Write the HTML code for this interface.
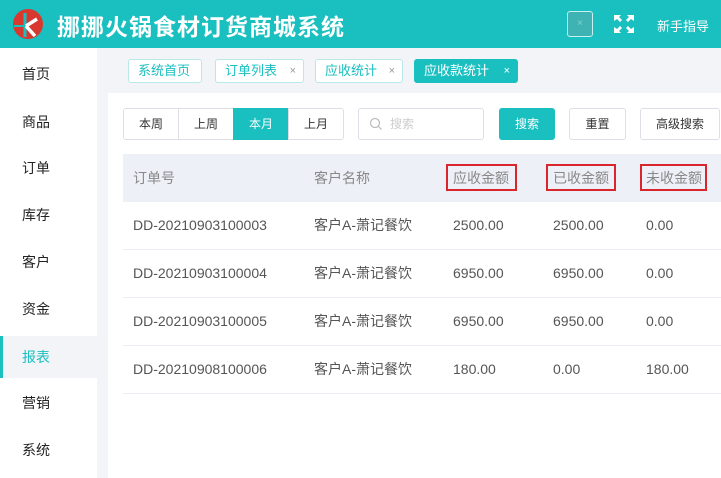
<!DOCTYPE html>
<html><head><meta charset="utf-8"><style>
*{margin:0;padding:0;box-sizing:border-box}
body{width:721px;height:478px;overflow:hidden;background:#f3f4f8;font-family:"Liberation Sans","Noto Sans CJK SC",sans-serif;position:relative;color:#333}
.abs{position:absolute}
.hdr{left:0;top:0;width:721px;height:48px;background:#1abfc0}
.side{left:0;top:48px;width:97px;height:430px;background:#fff}
.si{position:absolute;left:0;width:97px;height:42px;line-height:42px;padding-left:22px;font-size:14px;color:#222}
.tag{position:absolute;top:59px;height:24px;line-height:22px;border:1px solid #b8e8e8;border-radius:3px;background:#fff;color:#1abfc0;font-size:13px;padding-left:9px}
.tag i{font-style:normal;position:absolute;right:7px;top:0;font-size:11px;color:#999}
.panel{left:108px;top:93px;width:613px;height:385px;background:#fff}
.btn{position:absolute;top:108px;height:32px;line-height:30px;border:1px solid #dcdfe6;border-radius:3px;text-align:center;font-size:12px;color:#333;background:#fff}
.cell{position:absolute;font-size:14px;color:#555;line-height:18px;height:18px}
.line{position:absolute;left:123px;width:598px;height:1px;background:#ebeef5}
.red{position:absolute;border:2px solid #d9262c}
</style></head><body>
<div class="abs hdr"></div>
<svg class="abs" style="left:12px;top:9px" width="32" height="32" viewBox="0 0 32 32"><circle cx="16" cy="15" r="15" fill="#d9382f"/><path d="M13 4v24" stroke="#1abfc0" stroke-width="3"/><path d="M14 17l11-7M14 17l9 10" stroke="#fff" stroke-width="3.5" fill="none"/><path d="M2 17h11" stroke="#1abfc0" stroke-width="2"/></svg>
<div class="abs" style="left:57px;top:8px;font-size:23px;font-weight:bold;color:#fff;letter-spacing:1px">挪挪火锅食材订货商城系统</div>
<div class="abs" style="left:567px;top:11px;width:26px;height:26px;border:1.5px solid #c8f0f0;border-radius:3px;background:#3fb3b4;color:#8cc;font-size:10px;text-align:center;line-height:23px">×</div>
<svg class="abs" style="left:614px;top:15px" width="20" height="18" viewBox="0 0 20 18"><g fill="#fff"><path d="M0 0h7l-2 2 3 3-2 2-3-3-3 2z"/><path d="M20 0h-7l2 2-3 3 2 2 3-3 3 2z"/><path d="M0 18h7l-2-2 3-3-2-2-3 3-3-2z"/><path d="M20 18h-7l2-2-3-3 2-2 3 3 3-2z"/></g></svg>
<div class="abs" style="left:657px;top:16px;font-size:13px;color:#fff">新手指导</div>
<div class="abs side"></div>
<div class="abs" style="left:0;top:336px;width:97px;height:42px;background:#f3f4f8"></div>
<div class="abs" style="left:0;top:336px;width:3px;height:42px;background:#1abfc0"></div>
<div class="si" style="top:53px">首页</div>
<div class="si" style="top:101px">商品</div>
<div class="si" style="top:147px">订单</div>
<div class="si" style="top:194px">库存</div>
<div class="si" style="top:241px">客户</div>
<div class="si" style="top:288px">资金</div>
<div class="si" style="top:336px;color:#1abfc0">报表</div>
<div class="si" style="top:382px">营销</div>
<div class="si" style="top:429px">系统</div>
<div class="tag" style="left:128px;width:74px">系统首页</div>
<div class="tag" style="left:215px;width:89px">订单列表<i>×</i></div>
<div class="tag" style="left:315px;width:88px">应收统计<i>×</i></div>
<div class="tag" style="left:414px;width:104px;background:#1abfc0;border-color:#1abfc0;color:#fff">应收款统计<i style="color:#fff">×</i></div>
<div class="abs panel"></div>
<div class="btn" style="left:123px;width:56px;border-radius:3px 0 0 3px">本周</div>
<div class="btn" style="left:178px;width:56px;border-radius:0">上周</div>
<div class="btn" style="left:233px;width:56px;border-radius:0;background:#1abfc0;border-color:#1abfc0;color:#fff">本月</div>
<div class="btn" style="left:288px;width:56px;border-radius:0 3px 3px 0">上月</div>
<div class="btn" style="left:358px;width:126px;text-align:left;padding-left:31px;color:#ccc">搜索</div>
<svg class="abs" style="left:369px;top:117px" width="14" height="14"><circle cx="6" cy="6" r="4.5" stroke="#bbb" fill="none" stroke-width="1.2"/><path d="M9.5 9.5l3 3" stroke="#bbb" stroke-width="1.2"/></svg>
<div class="btn" style="left:499px;width:56px;background:#1abfc0;border-color:#1abfc0;color:#fff">搜索</div>
<div class="btn" style="left:569px;width:57px">重置</div>
<div class="btn" style="left:640px;width:80px">高级搜索</div>
<div class="abs" style="left:123px;top:154px;width:598px;height:48px;background:#eef0f8"></div>
<div class="cell" style="left:133px;top:169px;color:#888">订单号</div>
<div class="cell" style="left:314px;top:169px;color:#888">客户名称</div>
<div class="cell" style="left:453px;top:169px;color:#888">应收金额</div>
<div class="cell" style="left:553px;top:169px;color:#888">已收金额</div>
<div class="cell" style="left:646px;top:169px;color:#888">未收金额</div>
<div class="red" style="left:446px;top:164px;width:71px;height:27px"></div>
<div class="red" style="left:546px;top:164px;width:70px;height:27px"></div>
<div class="red" style="left:640px;top:164px;width:67px;height:27px"></div>
<div class="cell" style="left:133px;top:216px">DD-20210903100003</div><div class="cell" style="left:314px;top:216px">客户A-萧记餐饮</div><div class="cell" style="left:453px;top:216px">2500.00</div><div class="cell" style="left:553px;top:216px">2500.00</div><div class="cell" style="left:646px;top:216px">0.00</div>
<div class="line" style="top:249px"></div>
<div class="cell" style="left:133px;top:264px">DD-20210903100004</div><div class="cell" style="left:314px;top:264px">客户A-萧记餐饮</div><div class="cell" style="left:453px;top:264px">6950.00</div><div class="cell" style="left:553px;top:264px">6950.00</div><div class="cell" style="left:646px;top:264px">0.00</div>
<div class="line" style="top:297px"></div>
<div class="cell" style="left:133px;top:312px">DD-20210903100005</div><div class="cell" style="left:314px;top:312px">客户A-萧记餐饮</div><div class="cell" style="left:453px;top:312px">6950.00</div><div class="cell" style="left:553px;top:312px">6950.00</div><div class="cell" style="left:646px;top:312px">0.00</div>
<div class="line" style="top:345px"></div>
<div class="cell" style="left:133px;top:360px">DD-20210908100006</div><div class="cell" style="left:314px;top:360px">客户A-萧记餐饮</div><div class="cell" style="left:453px;top:360px">180.00</div><div class="cell" style="left:553px;top:360px">0.00</div><div class="cell" style="left:646px;top:360px">180.00</div>
<div class="line" style="top:393px"></div>
</body></html>
